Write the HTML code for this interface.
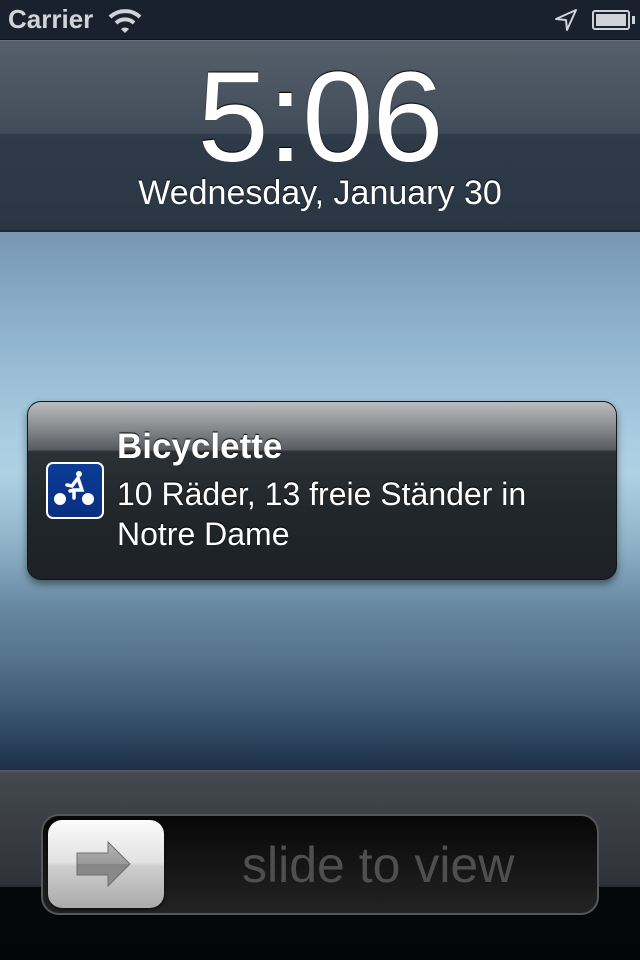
<!DOCTYPE html>
<html><head><meta charset="utf-8"><style>
*{margin:0;padding:0;box-sizing:border-box}
body{width:640px;height:960px;position:relative;overflow:hidden;font-family:"Liberation Sans",sans-serif;background:#000}
.abs{position:absolute}
#status{left:0;top:0;width:640px;height:40px;background:#18212d;border-bottom:1px solid #0c1118}
#clock{left:0;top:40px;width:640px;height:192px;background:linear-gradient(#56606b,#414c59 49%,#2f3b49 49.5%,#2b3643);border-top:1px solid #6a737d;border-bottom:2px solid #1f2833}
#wall{left:0;top:232px;width:640px;height:538px;background:linear-gradient(#7797b3 0%,#93b8d1 22%,#a9cde1 38%,#aed2e4 45%,#8eb3c9 58%,#6788a1 70%,#4e6c86 82%,#324c67 92%,#1e2f48 100%)}
#bot{left:0;top:770px;width:640px;height:190px;background:linear-gradient(#5a5f66 0,#44484f 3px,#2f3238 60%,#25282e 61.5%,#050608 61.6%,#040507)}
#note{left:27px;top:401px;width:590px;height:179px;border-radius:14px;background:linear-gradient(#bbbcbe 0,#8a8c8f 14%,#575b5f 27%,#2c3135 28%,#22272b 60%,#1d2125);border:1px solid #121518;box-shadow:0 4px 8px rgba(0,0,0,.45)}
#slider{left:41px;top:814px;width:558px;height:101px;border-radius:18px;background:linear-gradient(#070707,#232323);border:2px solid #545659}
#knob{left:48px;top:820px;width:116px;height:88px;border-radius:14px;background:linear-gradient(#fbfbfb,#e2e2e2 48%,#cfcfcf 52%,#aaa);box-shadow:0 2px 3px rgba(0,0,0,.6)}
</style></head><body>
<div id="status" class="abs"></div>
<div class="abs" style="left:8px;top:4px;font-size:26px;font-weight:bold;color:#d0d3d7">Carrier</div>
<svg class="abs" style="left:108px;top:8px" width="34" height="26" viewBox="0 0 34 26"><path d="M2 9 A22 22 0 0 1 32 9" stroke="#d0d3d7" stroke-width="4" fill="none"/><path d="M8 15 A13 13 0 0 1 26 15" stroke="#d0d3d7" stroke-width="4" fill="none"/><path d="M13 21 L17 25 L21 21 A6 6 0 0 0 13 21Z" fill="#d0d3d7"/></svg>
<svg class="abs" style="left:554px;top:8px" width="24" height="24" viewBox="0 0 24 24"><path d="M22 2 L2 11 L12 12 L13 22 Z" stroke="#cfd2d6" stroke-width="2" fill="none" stroke-linejoin="round"/></svg>
<div class="abs" style="left:592px;top:10px;width:38px;height:20px;border:2px solid #cfd2d6;border-radius:3px;padding:2px"><div style="width:100%;height:100%;background:#cfd2d6"></div></div>
<div class="abs" style="left:632px;top:16px;width:3px;height:8px;background:#cfd2d6"></div>
<div id="clock" class="abs"></div>
<div class="abs" style="left:0;top:48px;width:640px;text-align:center;font-size:128px;color:#fff;letter-spacing:-1px;line-height:140px;text-shadow:0 -1px 1px #000">5:06</div>
<div class="abs" style="left:0;top:173px;width:640px;text-align:center;font-size:34px;color:#fff;line-height:40px;text-shadow:0 -1px 1px #000">Wednesday, January 30</div>
<div id="wall" class="abs"></div>
<div id="note" class="abs"></div>
<div class="abs" style="left:46px;top:462px;width:58px;height:57px;border-radius:7px;background:#fff;padding:2px"><div style="width:100%;height:100%;border-radius:5px;background:linear-gradient(#0b3c96,#0a2f80)"></div></div>
<svg class="abs" style="left:48px;top:464px" width="54" height="53" viewBox="0 0 54 53"><circle cx="12" cy="35" r="6" fill="#fff"/><circle cx="40" cy="35" r="6" fill="#fff"/><circle cx="31" cy="10" r="3" fill="#fff"/><path d="M30 14 L34 26 L26 26 L26 34 M30 14 L24 22 L19 21 M26 26 L22 27" stroke="#fff" stroke-width="3.5" fill="none" stroke-linecap="round"/></svg>
<div class="abs" style="left:117px;top:427px;font-size:35px;font-weight:bold;color:#fff;text-shadow:0 -1px 1px #000">Bicyclette</div>
<div class="abs" style="left:117px;top:474px;font-size:32px;color:#fff;line-height:40px;text-shadow:0 -1px 1px #000">10 Räder, 13 freie Ständer in<br>Notre Dame</div>
<div id="bot" class="abs"></div>
<div id="slider" class="abs"></div>
<div id="knob" class="abs"></div>
<svg class="abs" style="left:74px;top:838px" width="70" height="52" viewBox="0 0 70 52"><defs><linearGradient id="g" x1="0" y1="0" x2="0" y2="1"><stop offset="0" stop-color="#b5b5b5"/><stop offset=".5" stop-color="#9a9a9a"/><stop offset=".5" stop-color="#858585"/><stop offset="1" stop-color="#8e8e8e"/></linearGradient></defs><path d="M3 15 L34 15 L34 4 L56 26 L34 48 L34 37 L3 37 Z" fill="url(#g)" stroke="#6f6f6f" stroke-width="1"/></svg>
<div class="abs" style="left:242px;top:836px;font-size:50px;color:#4f4f4f">slide to view</div>
</body></html>
